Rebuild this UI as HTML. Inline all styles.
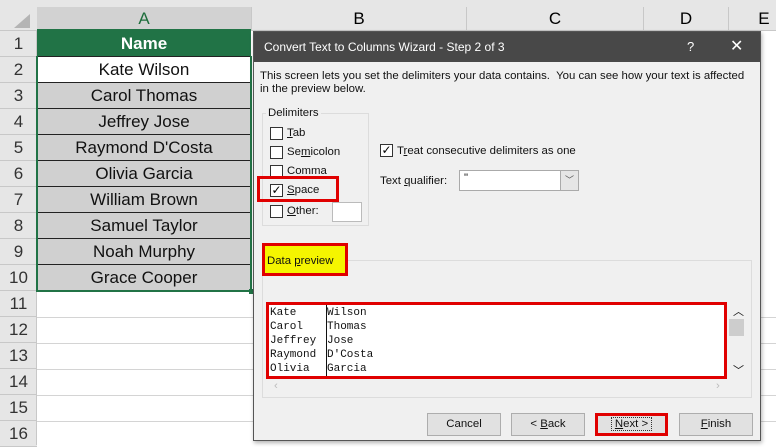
<!DOCTYPE html>
<html><head><style>
*{margin:0;padding:0;box-sizing:border-box}
body{width:776px;height:445px;overflow:hidden;background:#fff;font-family:"Liberation Sans",sans-serif;position:relative}
.a{position:absolute}
.rh{position:absolute;left:0;width:37px;background:#e6e6e6;border-bottom:1px solid #c8c8c8;color:#333;font-size:17px;text-align:center;line-height:26px}
.cell{position:absolute;left:37px;width:214px;height:26px;background:#d0d0d0;border-bottom:1px solid #222;font-size:17px;text-align:center;line-height:26px;color:#111}
.gl{position:absolute;left:37px;width:739px;height:1px;background:#d4d4d4}
.d{font-size:11.4px;color:#111;position:absolute;white-space:nowrap}
.cb{position:absolute;width:13px;height:13px;border:1px solid #333;background:#fff}
.btn{position:absolute;top:413px;height:23px;background:#e1e1e1;border:1px solid #adadad;font-size:11.4px;text-align:center;line-height:21px;color:#111}
.mono{font-family:"Liberation Mono",monospace;font-size:11px;line-height:14px;color:#111}
</style></head><body>
<div class="a" style="left:0;top:0;width:776px;height:31px;background:#e6e6e6;border-bottom:1px solid #c8c8c8"></div>
<div class="a" style="left:37px;top:7px;width:214px;height:24px;background:#d2d2d2;color:#1e6e3c;font-size:17px;text-align:center;line-height:24px;border-bottom:2px solid #217346">A</div>
<div class="a" style="left:251px;top:7px;width:215px;height:24px;font-size:17px;text-align:center;line-height:24px;border-left:1px solid #c8c8c8">B</div>
<div class="a" style="left:466px;top:7px;width:177px;height:24px;font-size:17px;text-align:center;line-height:24px;border-left:1px solid #c8c8c8">C</div>
<div class="a" style="left:643px;top:7px;width:85px;height:24px;font-size:17px;text-align:center;line-height:24px;border-left:1px solid #c8c8c8">D</div>
<div class="a" style="left:728px;top:7px;width:60px;height:24px;font-size:17px;text-align:center;line-height:24px;border-left:1px solid #c8c8c8;padding-right:8px">&nbsp;&nbsp;&nbsp;&nbsp;E</div>
<div class="a" style="left:14px;top:14px;width:0;height:0;border-left:16px solid transparent;border-bottom:14px solid #b4b4b4"></div>

<div class="gl" style="top:317px"></div><div class="gl" style="top:343px"></div><div class="gl" style="top:369px"></div><div class="gl" style="top:395px"></div><div class="gl" style="top:421px"></div>

<div class="rh" style="top:31px;height:26px">1</div>
<div class="rh" style="top:57px;height:26px">2</div>
<div class="rh" style="top:83px;height:26px">3</div>
<div class="rh" style="top:109px;height:26px">4</div>
<div class="rh" style="top:135px;height:26px">5</div>
<div class="rh" style="top:161px;height:26px">6</div>
<div class="rh" style="top:187px;height:26px">7</div>
<div class="rh" style="top:213px;height:26px">8</div>
<div class="rh" style="top:239px;height:26px">9</div>
<div class="rh" style="top:265px;height:26px">10</div>
<div class="rh" style="top:291px;height:26px">11</div>
<div class="rh" style="top:317px;height:26px">12</div>
<div class="rh" style="top:343px;height:26px">13</div>
<div class="rh" style="top:369px;height:26px">14</div>
<div class="rh" style="top:395px;height:26px">15</div>
<div class="rh" style="top:421px;height:26px">16</div>
<div class="a" style="left:0;top:31px;width:37px;height:414px;border-right:1px solid #c8c8c8"></div>

<div class="cell" style="top:31px;background:#217346;color:#fff;font-weight:bold">Name</div>
<div class="cell" style="top:57px;background:#fff">Kate Wilson</div>
<div class="cell" style="top:83px">Carol Thomas</div>
<div class="cell" style="top:109px">Jeffrey Jose</div>
<div class="cell" style="top:135px">Raymond D'Costa</div>
<div class="cell" style="top:161px">Olivia Garcia</div>
<div class="cell" style="top:187px">William Brown</div>
<div class="cell" style="top:213px">Samuel Taylor</div>
<div class="cell" style="top:239px">Noah Murphy</div>
<div class="cell" style="top:265px">Grace Cooper</div>
<div class="a" style="left:36px;top:56px;width:216px;height:236px;border:2px solid #217346;border-top:none"></div>
<div class="a" style="left:249px;top:289px;width:5px;height:5px;background:#217346"></div>

<!-- dialog -->
<div class="a" style="left:253px;top:31px;width:508px;height:410px;background:#f0f0f0;border:1px solid #555;box-shadow:1px 2px 4px rgba(0,0,0,.3)">
<div class="a" style="left:0;top:0;width:506px;height:30px;background:#484848;color:#fff;font-size:12px;line-height:30px;padding-left:10px">Convert Text to Columns Wizard - Step 2 of 3
<span class="a" style="left:433px;top:0;font-size:13px">?</span>
<span class="a" style="left:476px;top:0;font-size:16px">✕</span></div>
</div>
<div class="d" style="left:260px;top:70px;line-height:13px">This screen lets you set the delimiters your data contains.&nbsp; You can see how your text is affected<br>in the preview below.</div>
<div class="a" style="left:262px;top:113px;width:107px;height:113px;border:1px solid #dcdcdc"></div>
<div class="d" style="left:266px;top:107px;background:#f0f0f0;padding:0 2px">Delimiters</div>
<div class="cb" style="left:270px;top:127px"></div><div class="d" style="left:287px;top:127px"><u>T</u>ab</div>
<div class="cb" style="left:270px;top:146px"></div><div class="d" style="left:287px;top:146px">Se<u>m</u>icolon</div>
<div class="cb" style="left:270px;top:165px"></div><div class="d" style="left:287px;top:165px">Comma</div>
<div class="cb" style="left:270px;top:184px;font-size:12px;line-height:10px;text-align:center">✓</div><div class="d" style="left:287px;top:184px"><u>S</u>pace</div>
<div class="a" style="left:257px;top:176px;width:82px;height:26px;border:3px solid #e00000"></div>
<div class="cb" style="left:270px;top:205px"></div><div class="d" style="left:287px;top:205px"><u>O</u>ther:</div>
<div class="a" style="left:332px;top:202px;width:30px;height:20px;background:#fff;border:1px solid #bbb"></div>
<div class="cb" style="left:380px;top:144px;font-size:12px;line-height:10px;text-align:center">✓</div><div class="d" style="left:397px;top:145px">T<u>r</u>eat consecutive delimiters as one</div>
<div class="d" style="left:380px;top:175px">Text <u>q</u>ualifier:</div>
<div class="a" style="left:459px;top:170px;width:120px;height:21px;background:#fff;border:1px solid #aaa"><span class="d" style="left:4px;top:1px">"</span><div class="a" style="right:0;top:0;width:18px;height:19px;background:#e6e6e6;border-left:1px solid #aaa;font-size:9px;text-align:center;line-height:19px;color:#555">﹀</div></div>
<div class="a" style="left:262px;top:260px;width:490px;height:138px;border:1px solid #dcdcdc"></div>
<div class="a" style="left:262px;top:243px;width:86px;height:33px;background:#f5f500;border:3px solid #e00000"></div>
<div class="d" style="left:267px;top:255px"><span>Data <u>p</u>review</span></div>
<div class="a" style="left:266px;top:302px;width:461px;height:77px;background:#fff;border:3px solid #e00000"></div>
<div class="a" style="left:326px;top:305px;width:1px;height:71px;background:#111"></div>
<div class="a mono" style="left:270px;top:306px">Kate<br>Carol<br>Jeffrey<br>Raymond<br>Olivia</div>
<div class="a mono" style="left:327px;top:306px">Wilson<br>Thomas<br>Jose<br>D'Costa<br>Garcia</div>
<div class="d" style="left:733px;top:303px;font-size:11px">︿</div>
<div class="a" style="left:729px;top:319px;width:15px;height:17px;background:#cdcdcd"></div>
<div class="d" style="left:733px;top:362px;font-size:11px">﹀</div>
<div class="d" style="left:274px;top:380px;color:#bbb">‹</div>
<div class="d" style="left:716px;top:380px;color:#bbb">›</div>
<div class="btn" style="left:427px;width:74px">Cancel</div>
<div class="btn" style="left:511px;width:74px">&lt; <u>B</u>ack</div>
<div class="btn" style="left:595px;width:73px;border:3px solid #e00000;line-height:17px"><span style="outline:1px dotted #333;padding:0 3px"><u>N</u>ext &gt;</span></div>
<div class="btn" style="left:679px;width:74px"><u>F</u>inish</div>
</body></html>
